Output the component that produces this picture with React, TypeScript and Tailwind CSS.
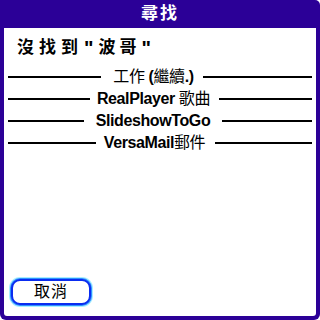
const rows = [
  { label: <span className="text-[16px] font-normal">工作 <b className="font-bold">(</b>繼續<b className="font-bold">.)</b></span>, pl: 12, pr: 9, extra: 16 },
  { label: <>RealPlayer <span className="text-[16px] font-normal">歌曲</span></>, pl: 7, pr: 9, extra: 11 },
  { label: <>SlideshowToGo</>, pl: 12, pr: 12, extra: 14 },
  { label: <>VersaMail<span className="text-[16px] font-normal">郵件</span></>, pl: 8, pr: 10, extra: 9 },
]

const font = { fontFamily: '"Liberation Sans", "Noto Sans CJK TC", sans-serif' }

export default function App() {
  return (
    <div
      className="flex h-[320px] w-[320px] flex-col rounded-tr-[5px] rounded-b-[6px] bg-[#2b0097] px-[4px] pb-[4px]"
      style={font}
    >
      <div className="flex h-[28px] items-center justify-center text-[17px] font-bold tracking-[2px] text-white">
        尋找
      </div>
      <div className="flex flex-1 flex-col rounded-b-[3px] bg-white text-black">
        <div className="mt-[11px] ml-[13px] flex h-[18px] items-center text-[17px] leading-[18px] font-bold">
          <span className="tracking-[5px]">沒找到</span>
          <span className="ml-[1px] text-[20px]">"</span>
          <span className="ml-[5px] tracking-[4px]">波哥</span>
          <span className="ml-[1px] text-[20px]">"</span>
        </div>
        <div className="mt-[9px] flex flex-col px-[4px]">
          {rows.map((r, i) => (
            <div key={i} className="flex h-[22px] items-center">
              <div className="h-[2px] grow basis-0 bg-black" />
              <span
                className="text-[16px] leading-[22px] font-bold tracking-[-0.4px] whitespace-nowrap"
                style={{ paddingLeft: r.pl, paddingRight: r.pr }}
              >
                {r.label}
              </span>
              <div className="h-[2px] grow bg-black" style={{ flexBasis: r.extra }} />
            </div>
          ))}
        </div>
        <button className="mt-auto mb-[11px] ml-[7px] flex h-[26px] w-[80px] items-center justify-center rounded-[9px] border-2 border-[#0a2cf0] bg-white text-[16px] tracking-[1px] shadow-[0_0_0_1px_#2f8fff,0_0_0_2px_#a8eeff]">
          取消
        </button>
      </div>
    </div>
  )
}
